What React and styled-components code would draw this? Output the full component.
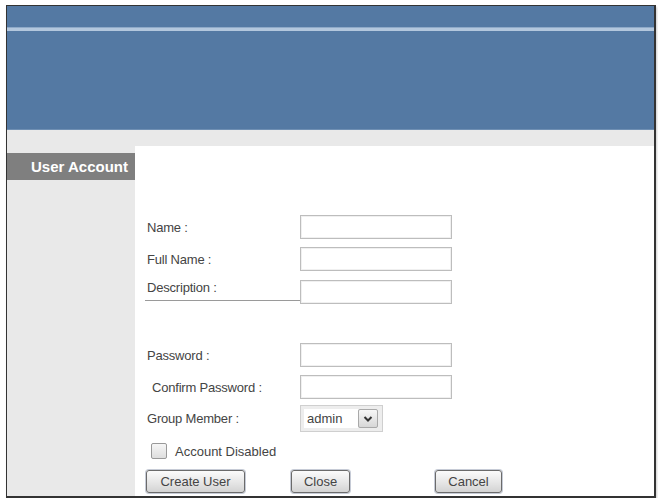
import React from 'react';
import styled, { createGlobalStyle } from 'styled-components';

const GlobalStyle = createGlobalStyle`
  body {
    margin: 0;
    background: #fff;
    font-family: 'Liberation Sans', Arial, sans-serif;
  }
`;

const Frame = styled.div`
  box-sizing: border-box;
  width: 650px;
  height: 493px;
  margin: 5px 0 0 6px;
  border: 1px solid #333;
  border-right-width: 2px;
  border-bottom-width: 2px;
  display: flex;
  flex-direction: column;
  box-shadow: 1px 2px 2px rgba(0, 0, 0, 0.2);
`;

const Header = styled.div`
  height: 124px;
  flex-shrink: 0;
  background: #5479a3;
  padding-top: 21px;
  box-sizing: border-box;
  border-bottom: 1px solid #6f8fb3;
`;

const HeaderLine = styled.div`
  height: 3px;
  background: #b3c7dd;
  border-top: 1px solid #8ea9c8;
`;

const Body = styled.div`
  flex: 1;
  display: flex;
  background: #e9e9e9;
`;

const Sidebar = styled.div`
  width: 128px;
  flex-shrink: 0;
  padding-top: 23px;
`;

const SideTab = styled.div`
  height: 27px;
  background: #7f7f7f;
  color: #fff;
  font-weight: bold;
  font-size: 15px;
  line-height: 27px;
  text-align: right;
  padding-right: 7px;
`;

const Content = styled.div`
  flex: 1;
  margin-top: 16px;
  background: #fff;
  padding: 69px 0 0 12px;
  display: flex;
  flex-direction: column;
`;

const Row = styled.div`
  display: flex;
  align-items: center;
  margin-top: ${(p) => p.$top || 0}px;
`;

const Label = styled.div`
  width: 153px;
  flex-shrink: 0;
  padding-left: ${(p) => p.$indent || 0}px;
  box-sizing: border-box;
  font-size: 13px;
  color: #444;
  letter-spacing: -0.2px;
`;

const UnderlinedLabel = styled(Label)`
  align-self: flex-start;
  margin-left: -2px;
  width: 155px;
  padding-left: 2px;
  padding-bottom: 5px;
  border-bottom: 1px solid #9a9a9a;
  line-height: 15px;
`;

const TextBox = styled.div`
  width: 152px;
  height: 24px;
  box-sizing: border-box;
  border: 1px solid #bdbdbd;
  box-shadow: inset 0 0 0 1px #f0f0f0;
  background: #fff;
`;

const SelectBox = styled.div`
  width: 83px;
  height: 27px;
  box-sizing: border-box;
  border: 1px solid #cfcfcf;
  background: #ededed;
  padding: 3px;
  display: flex;
`;

const SelectValue = styled.div`
  flex: 1;
  background: #fff;
  font-size: 13px;
  color: #444;
  line-height: 19px;
  padding-left: 3px;
`;

const SelectArrow = styled.div`
  width: 20px;
  box-sizing: border-box;
  border: 1px solid #a9a9a9;
  border-radius: 2px;
  background: linear-gradient(#f7f7f7, #d7d7d7);
  display: flex;
  align-items: center;
  justify-content: center;
  margin-right: 1px;
`;

const CheckRow = styled.label`
  display: flex;
  align-items: center;
  margin-top: 11px;
  padding-left: 4px;
  font-size: 13px;
  color: #444;
`;

const CheckBox = styled.span`
  width: 16px;
  height: 16px;
  box-sizing: border-box;
  border: 1px solid #999;
  border-radius: 2px;
  background: linear-gradient(#f6f6f6, #dedede);
  margin-right: 8px;
`;

const Buttons = styled.div`
  display: flex;
  margin-top: 11px;
  margin-left: -1px;
`;

const Button = styled.button`
  width: ${(p) => p.$width}px;
  height: 23px;
  margin-left: ${(p) => p.$push || 0}px;
  box-sizing: border-box;
  border: 1px solid #6b6b6b;
  border-radius: 3px;
  background: linear-gradient(#fbfbfb, #e4e4e4 60%, #d3d3d3);
  box-shadow: 0 0 0 1px #c6cbd6;
  font-family: 'Liberation Sans', Arial, sans-serif;
  font-size: 13px;
  color: #444;
  padding: 0;
`;

const Chevron = () => (
  <svg width="10" height="8" viewBox="0 0 10 8">
    <path d="M1.5 2 L5 5.5 L8.5 2" fill="none" stroke="#333" strokeWidth="2" />
  </svg>
);

const fields = [
  { label: 'Name :', top: 0 },
  { label: 'Full Name :', top: 8 },
];

export default function App() {
  return (
    <>
      <GlobalStyle />
      <Frame>
        <Header>
          <HeaderLine />
        </Header>
        <Body>
          <Sidebar>
            <SideTab>User Account</SideTab>
          </Sidebar>
          <Content>
            {fields.map((f) => (
              <Row key={f.label} $top={f.top}>
                <Label>{f.label}</Label>
                <TextBox />
              </Row>
            ))}
            <Row $top={9}>
              <UnderlinedLabel>Description :</UnderlinedLabel>
              <TextBox />
            </Row>
            <Row $top={39}>
              <Label>Password :</Label>
              <TextBox />
            </Row>
            <Row $top={8}>
              <Label $indent={5}>Confirm Password :</Label>
              <TextBox />
            </Row>
            <Row $top={6}>
              <Label>Group Member :</Label>
              <SelectBox>
                <SelectValue>admin</SelectValue>
                <SelectArrow>
                  <Chevron />
                </SelectArrow>
              </SelectBox>
            </Row>
            <CheckRow>
              <CheckBox />
              Account Disabled
            </CheckRow>
            <Buttons>
              <Button $width={99}>Create User</Button>
              <Button $width={59} $push={46}>Close</Button>
              <Button $width={67} $push={85}>Cancel</Button>
            </Buttons>
          </Content>
        </Body>
      </Frame>
    </>
  );
}
